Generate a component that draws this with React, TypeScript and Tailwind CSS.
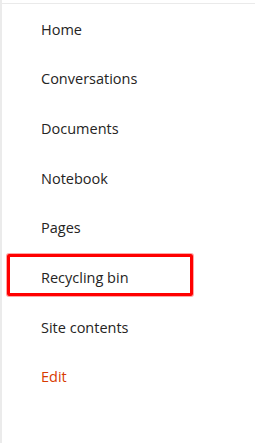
import React from "react";

type T_NavItem = {
  label: string;
  highlighted?: boolean;
  accent?: boolean;
};

const items: T_NavItem[] = [
  { label: "Home" },
  { label: "Conversations" },
  { label: "Documents" },
  { label: "Notebook" },
  { label: "Pages" },
  { label: "Recycling bin", highlighted: true },
  { label: "Site contents" },
  { label: "Edit", accent: true },
];

const NavRow: React.FunctionComponent<{ item: T_NavItem }> = ({ item }) => {
  return (
    <div className="relative flex h-[49.67px] items-center pl-[39px]">
      <span
        className={
          item.accent
            ? "text-[14.5px] leading-[20px] text-[#d83b01]"
            : "text-[14.5px] leading-[20px] text-[#252423]"
        }
      >
        {item.label}
      </span>
      {item.highlighted && (
        // annotation box drawn over the row
        <div className="pointer-events-none absolute left-[5px] top-[1px] h-[42px] w-[186px] rounded-[2px] border-[3px] border-[#ff0000] shadow-[0_0_0_1px_rgba(255,0,0,0.35)]" />
      )}
    </div>
  );
};

const App: React.FunctionComponent = () => {
  return (
    <div
      className="h-screen w-full border-l-2 border-[#ebebeb] bg-white pt-[3px]"
      style={{ fontFamily: '"Segoe UI", "Open Sans", sans-serif' }}
    >
      <nav className="border-t border-[#eaeaea] pt-[1px]">
        {items.map((item) => (
          <NavRow key={item.label} item={item} />
        ))}
      </nav>
    </div>
  );
};

export default App;
